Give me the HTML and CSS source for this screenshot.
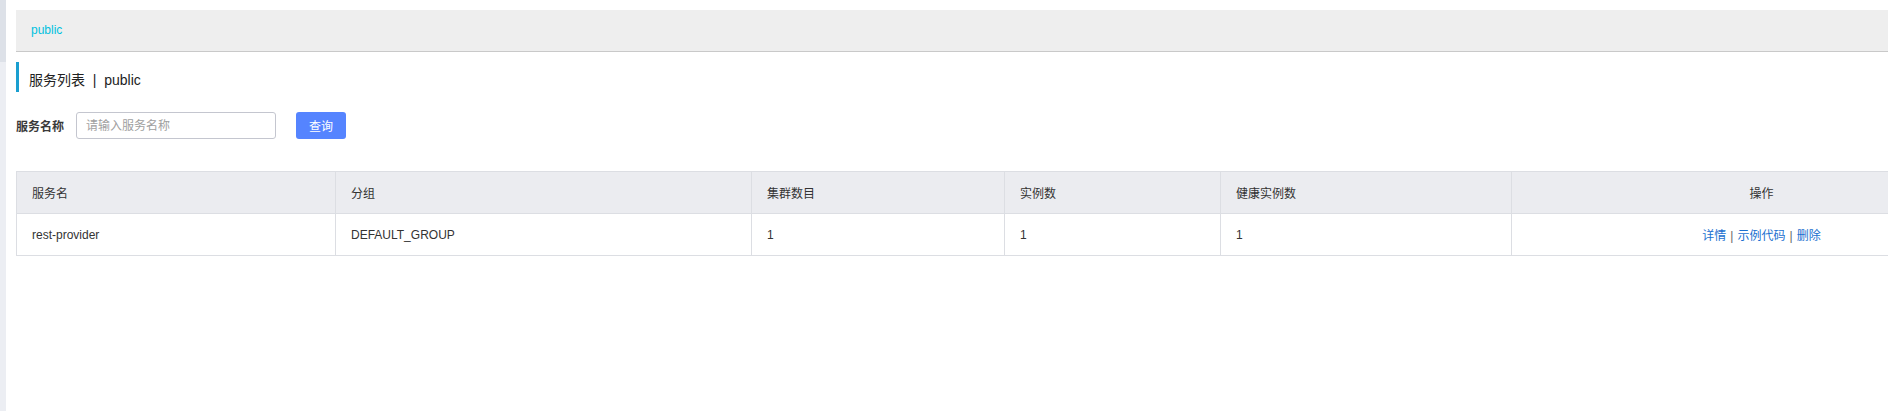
FILE: index.html
```html
<!DOCTYPE html>
<html lang="zh">
<head>
<meta charset="utf-8">
<title>服务列表</title>
<link rel="stylesheet" href="styles.css">
</head>
<body>
<div class="layout">
  <aside class="side">
    <div class="side-top"></div>
    <div class="side-rest"></div>
  </aside>
  <main class="main">
    <div class="ns-bar"><span class="ns-item">public</span></div>
    <h1 class="page-title">服务列表 &nbsp;|&nbsp; public</h1>
    <form class="search">
      <label class="search-label">服务名称</label>
      <input class="search-input" type="text" placeholder="请输入服务名称">
      <button class="btn-primary" type="button">查询</button>
    </form>
    <div class="table-wrap">
      <table class="grid">
        <colgroup>
          <col class="c1"><col class="c2"><col class="c3"><col class="c4"><col class="c5"><col class="c6">
        </colgroup>
        <thead>
          <tr>
            <th>服务名</th><th>分组</th><th>集群数目</th><th>实例数</th><th>健康实例数</th><th class="center">操作</th>
          </tr>
        </thead>
        <tbody>
          <tr>
            <td>rest-provider</td><td>DEFAULT_GROUP</td><td>1</td><td>1</td><td>1</td>
            <td class="center"><a class="link">详情</a><span class="sep">|</span><a class="link">示例代码</a><span class="sep">|</span><a class="link">删除</a></td>
          </tr>
        </tbody>
      </table>
    </div>
  </main>
</div>
</body>
</html>
```
FILE: styles.css
```css
html, body {
  margin: 0;
  padding: 0;
  background: #fff;
  overflow: hidden;
}
body {
  font-family: "Liberation Sans", Arial, "Noto Sans CJK SC", sans-serif;
  color: #333;
  font-size: 12px;
}
.layout {
  display: flex;
  width: 1888px;
  height: 411px;
  overflow: hidden;
}
.side {
  width: 6px;
  flex: none;
  display: flex;
  flex-direction: column;
}
.side-top {
  height: 62px;
  background: #dde1e8;
}
.side-rest {
  flex: 1;
  background: #eceef3;
}
.main {
  flex: 1;
  min-width: 0;
  margin-left: 10px;
  padding-top: 10px;
  overflow: hidden;
}
.ns-bar {
  height: 41px;
  background: #eeeeee;
  border-bottom: 1px solid #c9c9c9;
  display: flex;
  align-items: center;
  padding-left: 15px;
}
.ns-item {
  color: #00c1de;
  font-size: 12px;
  position: relative;
  top: -1px;
}
.page-title {
  margin: 10px 0 0 0;
  height: 30px;
  border-left: 3px solid #1a9fd0;
  padding-left: 10px;
  font-size: 14px;
  font-weight: normal;
  color: #222;
  display: flex;
  align-items: center;
  line-height: 24px;
  padding-top: 6px;
  box-sizing: border-box;
}
.search {
  margin: 20px 0 0 0;
  display: flex;
  align-items: center;
  height: 27px;
}
.search-label {
  font-weight: bold;
  font-size: 12px;
  color: #3a3a3a;
  width: 60px;
}
.search-input {
  box-sizing: border-box;
  width: 200px;
  height: 27px;
  border: 1px solid #c4c6cf;
  border-radius: 3px;
  padding: 0 9px;
  font: inherit;
  font-size: 12px;
  color: #333;
  outline: none;
}
.search-input::placeholder {
  color: #a0a0a0;
}
.btn-primary {
  margin-left: 20px;
  width: 50px;
  height: 27px;
  border: none;
  border-radius: 3px;
  background: #5584ff;
  color: #fff;
  font: inherit;
  font-size: 12px;
  padding: 0;
}
.table-wrap {
  margin-top: 32px;
  width: 1995px;
}
.grid {
  width: 1995px;
  table-layout: fixed;
  border-collapse: collapse;
}
.c1 { width: 319px; }
.c2 { width: 416px; }
.c3 { width: 253px; }
.c4 { width: 216px; }
.c5 { width: 291px; }
.c6 { width: 500px; }
.grid th, .grid td {
  border: 1px solid #dcdee3;
  height: 42px;
  padding: 0 0 0 15px;
  text-align: left;
  font-size: 12px;
  color: #333;
  box-sizing: border-box;
}
.grid th {
  background: #ebecf0;
  font-weight: normal;
}
.grid .center {
  text-align: center;
  padding: 0;
}
.link {
  color: #1a6fcf;
  cursor: pointer;
}
.sep {
  color: #666;
  margin: 0 4px;
}
```
